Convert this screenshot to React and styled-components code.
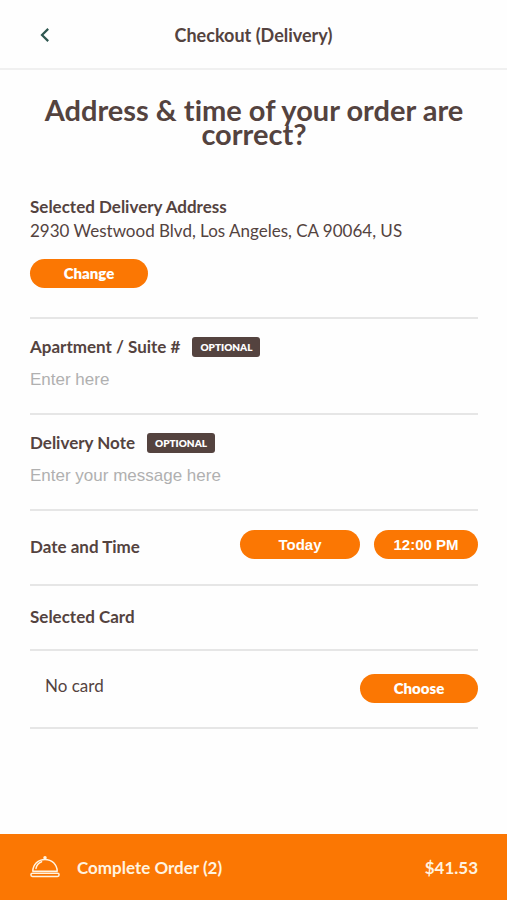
import { useState } from "react";
import styled, { createGlobalStyle } from "styled-components";

function OptionalField({ id, label, placeholder }) {
  const [value, setValue] = useState("");

  return (
    <Section>
      <LabelRow>
        <FieldLabel htmlFor={id}>{label}</FieldLabel>
        <Badge>OPTIONAL</Badge>
      </LabelRow>
      <TextInput
        id={id}
        type="text"
        placeholder={placeholder}
        value={value}
        onChange={(e) => setValue(e.target.value)}
      />
    </Section>
  );
}

function ClocheIcon() {
  return (
    <svg
      width="30"
      height="22"
      viewBox="0 0 30 22"
      fill="none"
      stroke="currentColor"
      strokeWidth="1.5"
      strokeLinecap="round"
      strokeLinejoin="round"
      aria-hidden="true"
    >
      <circle cx="15" cy="1.8" r="1" fill="currentColor" />
      <path d="M2.8 15.2C3 8.6 8 3.4 15 3.4S27 8.6 27.2 15.2Z" />
      <path d="M6 12.4C6.6 9.4 8.6 7 11.6 5.8" />
      <rect x="0.9" y="17.2" width="28.2" height="3.2" rx="1.6" />
    </svg>
  );
}

function App() {
  return (
    <Page>
      <GlobalStyle />
      <Header>
        <BackButton type="button" aria-label="Back">
          <svg
            width="10"
            height="14"
            viewBox="0 0 10 14"
            fill="none"
            stroke="currentColor"
            strokeWidth="2.2"
            aria-hidden="true"
          >
            <path d="M8.2 0.9L2 7L8.2 13.1" />
          </svg>
        </BackButton>
        <HeaderTitle>Checkout (Delivery)</HeaderTitle>
      </Header>

      <Content>
        <Heading>Address &amp; time of your order are correct?</Heading>

        <AddressSection>
          <Label>Selected Delivery Address</Label>
          <Text>2930 Westwood Blvd, Los Angeles, CA 90064, US</Text>
          <PillButton type="button">Change</PillButton>
        </AddressSection>

        <OptionalField
          id="apartment"
          label="Apartment / Suite #"
          placeholder="Enter here"
        />
        <OptionalField
          id="note"
          label="Delivery Note"
          placeholder="Enter your message here"
        />

        <DateSection>
          <Label id="date-time">Date and Time</Label>
          <Pickers>
            <PillSelect $width="120px" aria-labelledby="date-time">
              <option>Today</option>
            </PillSelect>
            <PillSelect $width="104px" aria-labelledby="date-time">
              <option>12:00 PM</option>
            </PillSelect>
          </Pickers>
        </DateSection>

        <CardTitle>
          <Label>Selected Card</Label>
        </CardTitle>
        <CardSection>
          <Text>No card</Text>
          <PillButton type="button">Choose</PillButton>
        </CardSection>
      </Content>

      <OrderButton type="button">
        <ClocheIcon />
        <span>Complete Order (2)</span>
        <Total>$41.53</Total>
      </OrderButton>
    </Page>
  );
}

export default App;

const GlobalStyle = createGlobalStyle`
  * {
    box-sizing: border-box;
  }
  body {
    margin: 0;
    background-color: #fefefe;
    color: #54433f;
    font-family: "Lato", sans-serif;
    font-variant-ligatures: none;
  }
`;

const Page = styled.div`
  display: flex;
  flex-direction: column;
  min-height: 100vh;
`;

const Header = styled.header`
  display: grid;
  grid-template-columns: 60px 1fr 60px;
  align-items: center;
  height: 70px;
  padding-top: 2px;
  border-bottom: 2px solid #f0f0f0;
`;

const BackButton = styled.button`
  display: flex;
  justify-content: flex-end;
  padding: 10px;
  border: none;
  background: none;
  color: #2f5750;
  cursor: pointer;
`;

const HeaderTitle = styled.h1`
  margin: 0;
  font-size: 18px;
  font-weight: 700;
  line-height: 24px;
  text-align: center;
`;

const Content = styled.main`
  flex: 1;
  padding: 28px 29px 40px 30px;
`;

const Heading = styled.h2`
  margin: 0 0 49px;
  font-size: 29px;
  font-weight: 700;
  line-height: 24px;
  text-align: center;
`;

const Section = styled.section`
  padding: 18px 0 21px;
  border-bottom: 2px solid #e6e6e6;
`;

const AddressSection = styled(Section)`
  padding: 0 0 29px;
  button {
    margin-top: 16px;
  }
`;

const DateSection = styled(Section)`
  display: flex;
  align-items: flex-end;
  justify-content: space-between;
  padding: 19px 0 25px;
`;

const CardTitle = styled(Section)`
  padding: 19px 0 20px;
`;

const CardSection = styled(Section)`
  display: flex;
  align-items: flex-start;
  justify-content: space-between;
  padding: 23px 0 24px 15px;
`;

const Label = styled.h3`
  margin: 0;
  font-size: 17px;
  font-weight: 700;
  line-height: 24px;
`;

const Text = styled.p`
  margin: 0;
  font-size: 17px;
  line-height: 24px;
`;

const LabelRow = styled.div`
  display: flex;
  align-items: center;
  gap: 12px;
  height: 20px;
  margin-bottom: 11px;
`;

const FieldLabel = styled.label`
  font-size: 17px;
  font-weight: 700;
  line-height: 24px;
`;

const Badge = styled.span`
  padding: 0 8px;
  border-radius: 3px;
  background-color: #54433f;
  color: #fefefe;
  font-size: 10px;
  font-weight: 800;
  line-height: 20px;
`;

const TextInput = styled.input`
  display: block;
  width: 100%;
  height: 24px;
  padding: 0;
  border: none;
  outline: none;
  background: none;
  color: #54433f;
  font-family: "Liberation Sans", sans-serif;
  font-size: 17px;
  &::placeholder {
    color: #b0b0b0;
  }
`;

const Pickers = styled.div`
  display: flex;
  gap: 14px;
`;

const PillButton = styled.button`
  display: block;
  width: 118px;
  height: 29px;
  padding: 0 0 2px;
  border: none;
  border-radius: 15px;
  background-color: #fb7703;
  color: #fefefe;
  font-family: "Lato", sans-serif;
  font-size: 15px;
  font-weight: 800;
  cursor: pointer;
`;

const PillSelect = styled.select`
  width: ${(props) => props.$width};
  height: 29px;
  padding: 0;
  border: none;
  border-radius: 15px;
  appearance: none;
  background-color: #fb7703;
  color: #fefefe;
  font-family: "Liberation Sans", sans-serif;
  font-size: 15px;
  font-weight: 700;
  text-align: center;
  text-align-last: center;
  cursor: pointer;
`;

const OrderButton = styled.button`
  display: flex;
  align-items: center;
  gap: 17px;
  width: 100%;
  height: 66px;
  padding: 0 29px 0 30px;
  border: none;
  background-color: #fb7703;
  color: #fff3e0;
  font-family: "Lato", sans-serif;
  font-size: 17px;
  font-weight: 700;
  cursor: pointer;
`;

const Total = styled.span`
  margin-left: auto;
`;
